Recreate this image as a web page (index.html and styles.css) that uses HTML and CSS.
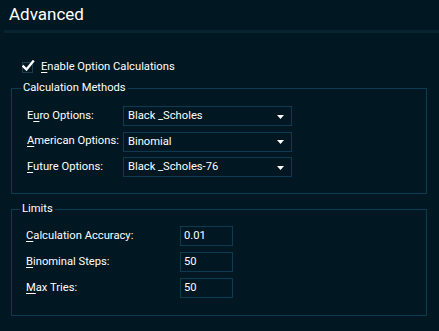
FILE: index.html
```html
<!DOCTYPE html>
<html>
<head>
<meta charset="utf-8">
<link rel="stylesheet" href="styles.css">
</head>
<body>
<div class="panel">
  <div class="title">Advanced</div>
  <div class="sep"></div>

  <label class="check-row">
    <span class="checkbox">
      <svg class="tick" width="13" height="13" viewBox="0 0 13 13"><path d="M1.5 6.5 L4.5 9.5 L11 1.5" fill="none" stroke="#ffffff" stroke-width="2.4" stroke-linecap="square"/></svg>
    </span>
    <span class="check-text"><u>E</u>nable Option Calculations</span>
  </label>

  <fieldset class="group methods">
    <legend>Calculation Methods</legend>
    <div class="rows">
      <span class="lbl">E<u>u</u>ro Options:</span>
      <div class="select"><span>Black _Scholes</span><svg class="arrow" width="7" height="4" viewBox="0 0 7 4"><polygon points="0,0 7,0 3.5,4" fill="#ffffff"/></svg></div>
      <span class="lbl"><u>A</u>merican Options:</span>
      <div class="select"><span>Binomial</span><svg class="arrow" width="7" height="4" viewBox="0 0 7 4"><polygon points="0,0 7,0 3.5,4" fill="#ffffff"/></svg></div>
      <span class="lbl"><u>F</u>uture Options:</span>
      <div class="select"><span>Black _Scholes-76</span><svg class="arrow" width="7" height="4" viewBox="0 0 7 4"><polygon points="0,0 7,0 3.5,4" fill="#ffffff"/></svg></div>
    </div>
  </fieldset>

  <fieldset class="group limits">
    <legend>Limits</legend>
    <div class="rows">
      <span class="lbl"><u>C</u>alculation Accuracy:</span>
      <div class="input">0.01</div>
      <span class="lbl"><u>B</u>inominal Steps:</span>
      <div class="input">50</div>
      <span class="lbl"><u>M</u>ax Tries:</span>
      <div class="input">50</div>
    </div>
  </fieldset>
</div>
</body>
</html>
```

FILE: styles.css
```css
html, body {
  margin: 0;
  padding: 0;
  background: #011722;
}
body {
  width: 439px;
  height: 331px;
  overflow: hidden;
  font-family: Roboto, "Liberation Sans", sans-serif;
  color: #ffffff;
  font-size: 11.2px;
}
.panel {
  display: flex;
  flex-direction: column;
}
.title {
  height: 30px;
  padding: 3px 0 0 9px;
  box-sizing: border-box;
  font-size: 17px;
  line-height: 22px;
}
.sep {
  height: 3px;
  margin-left: 4px;
  background: #072430;
}
.check-row {
  display: flex;
  align-items: center;
  margin: 26px 0 0 22px;
  height: 16px;
  line-height: 16px;
}
.checkbox {
  position: relative;
  width: 9px;
  height: 9px;
  border: 1px solid #1d3c4c;
  margin-right: 8px;
}
.tick {
  position: absolute;
  left: -1px;
  top: -3px;
}
.group {
  margin: 5px 12px 0 11px;
  padding: 0;
  border: 1px solid #0c3a50;
  min-width: 0;
}
.group legend {
  padding: 0 2px;
  line-height: 16px;
  height: 16px;
}
.methods legend { margin-left: 9px; }
.limits legend { margin-left: 8px; }
.rows {
  display: grid;
  align-items: center;
}
.methods .rows {
  grid-template-columns: 96px 169px;
  grid-auto-rows: 20px;
  row-gap: 5.5px;
  padding: 10px 0 16px 15px;
}
.limits {
  margin-top: 7px;
}
.limits .rows {
  grid-template-columns: 154px 53px;
  grid-auto-rows: 20px;
  row-gap: 6px;
  padding: 9px 0 17px 14px;
}
.lbl {
  line-height: 16px;
  margin-top: -1px;
  white-space: nowrap;
}
.select, .input {
  box-sizing: border-box;
  height: 20px;
  border: 1px solid #0c3a50;
  display: flex;
  align-items: center;
  padding-left: 4px;
  line-height: 16px;
  white-space: nowrap;
}
.select {
  justify-content: space-between;
  padding-right: 7px;
}
.arrow {
  display: block;
  margin-top: 1px;
}
.input {
  padding-left: 3px;
}
u {
  text-decoration: underline;
  text-underline-offset: 2px;
}
```
